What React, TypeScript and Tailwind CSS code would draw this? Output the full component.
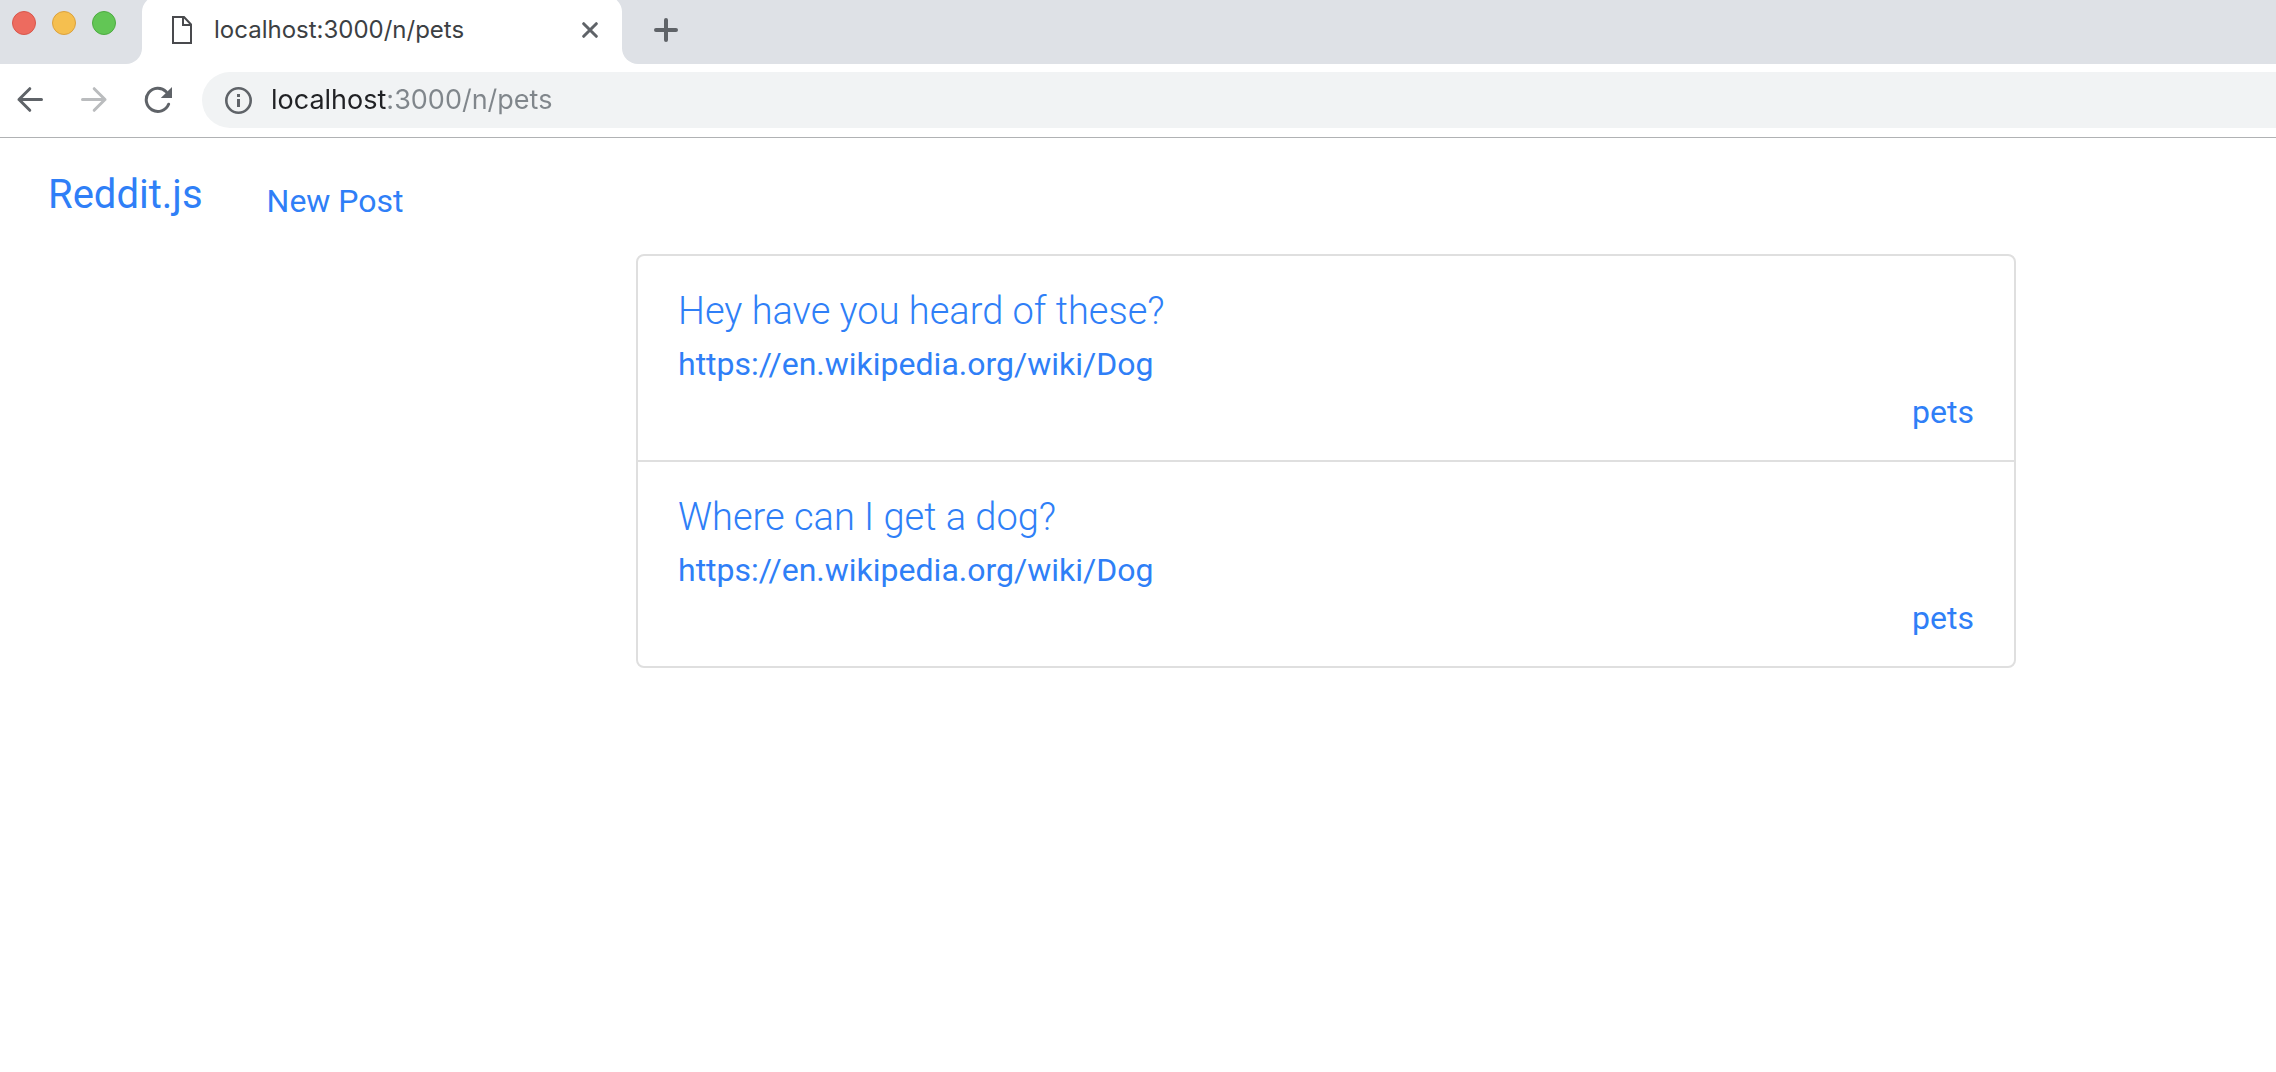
type Post = { id: number; title: string; url: string; subreddit: string };

const posts: Post[] = [
  { id: 1, title: "Hey have you heard of these?", url: "https://en.wikipedia.org/wiki/Dog", subreddit: "pets" },
  { id: 2, title: "Where can I get a dog?", url: "https://en.wikipedia.org/wiki/Dog", subreddit: "pets" },
];

function FileIcon() {
  return (
    <svg width="20" height="28" viewBox="0 0 20 28" fill="none" stroke="#494a4d" strokeWidth="2" aria-hidden="true">
      <path d="M1 1H12L19 8.5V27H1Z" />
      <path d="M11 1V9H19" />
    </svg>
  );
}

function CloseIcon() {
  return (
    <svg width="16" height="16" viewBox="0 0 16 16" stroke="#5f6368" strokeWidth="3" strokeLinecap="round" aria-hidden="true">
      <path d="M1.7 1.7L14.3 14.3M14.3 1.7L1.7 14.3" />
    </svg>
  );
}

function PlusIcon() {
  return (
    <svg width="24" height="24" viewBox="0 0 24 24" stroke="#5f6368" strokeWidth="4" strokeLinecap="round" aria-hidden="true">
      <path d="M12 2V22M2 12H22" />
    </svg>
  );
}

function ArrowIcon({ forward = false }: { forward?: boolean }) {
  return (
    <svg
      width="28"
      height="28"
      viewBox="0 0 28 28"
      fill="none"
      stroke={forward ? "#babcbe" : "#5f6368"}
      strokeWidth="3"
      strokeLinecap="round"
      strokeLinejoin="round"
      aria-hidden="true"
    >
      {forward ? <path d="M2.5 13.5H25M14.2 2.7L25 13.5L14.2 24.3" /> : <path d="M25.5 13.5H3M13.8 2.7L3 13.5L13.8 24.3" />}
    </svg>
  );
}

function ReloadIcon() {
  return (
    <svg width="28" height="28" viewBox="0 0 28 28" fill="none" aria-hidden="true">
      <path
        d="M24.6 18.2A11.6 11.6 0 1 1 22.2 5.8"
        stroke="#5f6368"
        strokeWidth="3"
        strokeLinecap="round"
      />
      <path d="M28 1V12H16.8Z" fill="#5f6368" />
    </svg>
  );
}

function InfoIcon() {
  return (
    <svg width="28" height="28" viewBox="0 0 28 28" fill="none" aria-hidden="true">
      <circle cx="13.5" cy="14.5" r="12.2" stroke="#5f6368" strokeWidth="2.6" />
      <path d="M12 8H15V11H12ZM12 13H15V21H12Z" fill="#5f6368" />
    </svg>
  );
}

function TabStrip() {
  return (
    <div className="flex h-16 overflow-hidden bg-white">
      <div className="flex w-[142px] shrink-0 gap-4 rounded-br-2xl bg-[#dee1e6] pt-[11px] pl-3">
        <button aria-label="Close window" className="size-6 rounded-full border border-[#d8564b] bg-[#ed6b5f]" />
        <button aria-label="Minimize window" className="size-6 rounded-full border border-[#dba13d] bg-[#f5bf4f]" />
        <button aria-label="Zoom window" className="size-6 rounded-full border border-[#4dab41] bg-[#62c655]" />
      </div>
      <div className="h-12 w-[480px] shrink-0 bg-[#dee1e6]">
        <div className="-mt-1 flex h-[68px] items-center rounded-t-2xl bg-white pr-6 pl-[30px]">
          <FileIcon />
          <span className="ml-[22px] flex-1 text-2xl text-[#3c4043]">localhost:3000/n/pets</span>
          <button aria-label="Close tab">
            <CloseIcon />
          </button>
        </div>
      </div>
      <div className="flex flex-1 items-center rounded-bl-2xl bg-[#dee1e6] pb-1 pl-8">
        <button aria-label="New tab">
          <PlusIcon />
        </button>
      </div>
    </div>
  );
}

function Toolbar() {
  return (
    <div className="flex items-center border-b border-[#b0b2b4] pt-2 pb-[9px] pl-4">
      <div className="flex w-[186px] shrink-0 items-center gap-9">
        <button aria-label="Back">
          <ArrowIcon />
        </button>
        <button aria-label="Forward" disabled>
          <ArrowIcon forward />
        </button>
        <button aria-label="Reload">
          <ReloadIcon />
        </button>
      </div>
      <div className="flex h-14 flex-1 items-center rounded-l-full bg-[#f1f3f4] pl-[23px]">
        <button aria-label="View site information">
          <InfoIcon />
        </button>
        <input
          aria-label="Address"
          defaultValue="localhost:3000/n/pets"
          className="ml-[18px] w-full bg-[linear-gradient(to_right,#202124_115px,#80868b_115px)] bg-clip-text text-[27px] leading-9 text-transparent outline-none"
        />
      </div>
    </div>
  );
}

function PostItem({ post }: { post: Post }) {
  return (
    <li className="px-10 pt-8 pb-6">
      <a href="#post" className="mb-1.5 block w-fit text-[38px] leading-[46px] font-light">
        {post.title}
      </a>
      <a href={post.url} className="block w-fit">
        {post.url}
      </a>
      <div className="text-right">
        <a href="/n/pets">{post.subreddit}</a>
      </div>
    </li>
  );
}

export default function App() {
  return (
    <div className="min-h-screen bg-white font-['Inter',sans-serif]">
      <header>
        <TabStrip />
        <Toolbar />
      </header>
      <div className="font-['Roboto',sans-serif] text-[32px] leading-[48px] text-[#2f7ff7]">
        <nav className="flex items-end gap-16 px-12 pt-[27px] pb-[29px]">
          <a href="/" className="text-[40px] leading-[60px]">
            Reddit.js
          </a>
          <a href="/posts/new">New Post</a>
        </nav>
        <main className="pr-[260px] pl-[636px]">
          <ul className="divide-y-2 divide-[#dfdfdf] rounded-lg border-2 border-[#dfdfdf]">
            {posts.map((post) => (
              <PostItem key={post.id} post={post} />
            ))}
          </ul>
        </main>
      </div>
    </div>
  );
}
